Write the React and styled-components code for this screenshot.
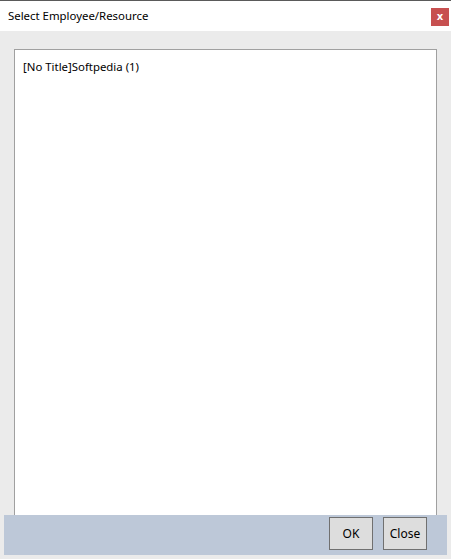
import styled, { createGlobalStyle } from "styled-components";

const GlobalStyle = createGlobalStyle`
  html, body {
    margin: 0;
    padding: 0;
    background: #ebebeb;
  }
  body {
    font-family: "Noto Sans", "Open Sans", "Liberation Sans", sans-serif;
  }
`;

const items = ["[No Title]Softpedia (1)"];

const App = () => {
  return (
    <Window>
      <GlobalStyle />
      <TitleBar>
        <Title>Select Employee/Resource</Title>
        <CloseX aria-label="close">x</CloseX>
      </TitleBar>
      <Body>
        <ListBox>
          {items.map((item) => (
            <ListItem key={item}>{item}</ListItem>
          ))}
        </ListBox>
      </Body>
      <Footer>
        <Button>OK</Button>
        <Button>Close</Button>
      </Footer>
    </Window>
  );
};
export default App;

const Window = styled.div`
  width: 451px;
  height: 559px;
  display: flex;
  flex-direction: column;
  background: #ebebeb;
  box-sizing: border-box;
`;

const TitleBar = styled.div`
  height: 31px;
  box-sizing: border-box;
  border-top: 1px solid #5a5a5a;
  background: #ffffff;
  display: flex;
  align-items: flex-start;
  justify-content: space-between;
  padding: 0 2px 0 8px;
`;

const Title = styled.div`
  font-size: 11.4px;
  color: #000;
  line-height: 16px;
  margin-top: 7px;
`;

const CloseX = styled.div`
  width: 18px;
  height: 18px;
  margin-top: 7px;
  background: #c75050;
  color: #fff;
  font-family: "DejaVu Sans", sans-serif;
  font-weight: bold;
  font-size: 10px;
  line-height: 17px;
  text-align: center;
`;

const Body = styled.div`
  flex: 1;
  display: flex;
  padding: 18px 14px 0 14px;
  min-height: 0;
`;

const ListBox = styled.div`
  flex: 1;
  background: #fff;
  border: 1px solid #a0a0a0;
  border-bottom: none;
  padding: 8px 8px;
  overflow: hidden;
`;

const ListItem = styled.div`
  font-size: 11.4px;
  line-height: 17px;
  color: #000;
`;

const Footer = styled.div`
  height: 40px;
  margin: 0 4px 4px 4px;
  background: #bdc8d8;
  display: flex;
  justify-content: flex-end;
  align-items: flex-start;
  gap: 10px;
  padding: 2px 20px 0 0;
  box-sizing: border-box;
`;

const Button = styled.button`
  width: 44px;
  height: 33px;
  padding: 0;
  background: #dddddd;
  border: 1px solid #707070;
  font-family: "Noto Sans", "Open Sans", sans-serif;
  font-size: 12px;
  color: #000;
`;
